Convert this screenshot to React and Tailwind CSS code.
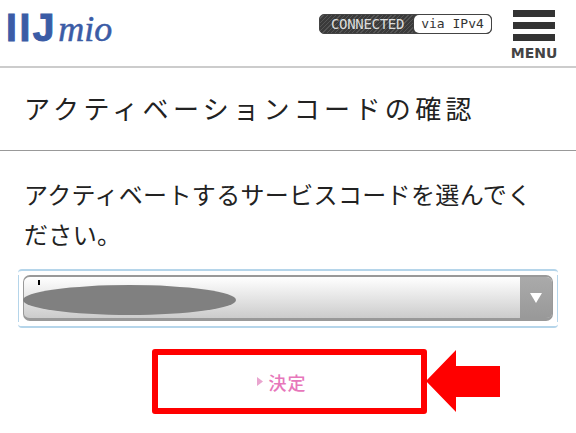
export default function App() {
  const jp = "font-['Noto_Sans_CJK_JP','Noto_Sans',sans-serif]";
  return (
    <div className={`w-[576px] h-[433px] bg-white overflow-hidden ${jp}`}>
      <header className="h-[68px] border-b-2 border-[#cccccc] flex items-start justify-between">
        <div className="ml-[6px] mt-[3px] flex items-baseline h-[50px] text-[#3b5ca6]">
          <span className="font-['Liberation_Sans',sans-serif] font-bold text-[39px] leading-[50px] tracking-[2.6px] [-webkit-text-stroke:1px_#3b5ca6]">IIJ</span>
          <span className="font-['Liberation_Serif',serif] italic text-[36px] leading-[50px] ml-[1px] [-webkit-text-stroke:0.5px_#3b5ca6]">mio</span>
        </div>
        <div className="flex items-start">
          <div className="mt-[14px] mr-[20px] w-[173px] h-[20px] rounded-[5px] border border-[#444] flex items-stretch overflow-hidden bg-[#3f3f3f]">
            <div className="w-[93px] pl-[2px] bg-[repeating-linear-gradient(135deg,#3a3a3a_0px,#3a3a3a_2px,#555555_2px,#555555_3px)] text-[#dddddd] text-[14px] leading-[18px] text-center font-['DejaVu_Sans_Mono',monospace] tracking-[-0.3px] whitespace-nowrap">CONNECTED</div>
            <div className="flex-1 ml-[1px] rounded-[5px] bg-white text-[#333] text-[13px] leading-[18px] text-center font-['DejaVu_Sans_Mono',monospace]">via IPv4</div>
          </div>
          <div className="mt-[10px] mr-[20px] w-[44px] flex flex-col items-center">
            <div className="w-[42px] h-[7px] bg-[#333]" />
            <div className="w-[42px] h-[7px] bg-[#333] mt-[5px]" />
            <div className="w-[42px] h-[7px] bg-[#333] mt-[5px]" />
            <div className="mt-[3px] font-['DejaVu_Sans',sans-serif] font-bold text-[#444] text-[14px] leading-[18px]">MENU</div>
          </div>
        </div>
      </header>

      <div className="h-[83px] border-b border-[#999999] px-[24px] flex items-center">
        <h1 className="text-[26px] font-normal text-[#222] tracking-[4.35px] leading-[40px] whitespace-nowrap -mt-[2px]">アクティベーションコードの確認</h1>
      </div>

      <p className="mt-[23px] mx-[24px] w-[520px] text-[24px] leading-[40px] tracking-[0.35px] text-[#222]">
        アクティベートするサービスコードを選んでください。
      </p>

      <div className="relative mt-[15px] ml-[18px] w-[540px] h-[59px] border-y-2 border-[#b5d5ea] rounded-[4px]">
        <div className="absolute left-0 top-[4px] bottom-[4px] w-[1px] bg-[#b5d5ea]" />
        <div className="absolute right-0 top-[4px] bottom-[4px] w-[1px] bg-[#b5d5ea]" />
        <div className="absolute left-[5px] top-[4px] w-[530px] h-[46px] rounded-[7px] border border-[#999] border-t-2 border-b-[3px] overflow-hidden bg-[linear-gradient(#ffffff,#cccccc)] flex justify-end">
          <div className="w-[32px] bg-[linear-gradient(#aaaaaa,#999999)] flex items-center justify-center">
            <svg width="12" height="10" viewBox="0 0 12 10"><path d="M0 0H12L6 10Z" fill="#fff" /></svg>
          </div>
        </div>
        <div className="absolute left-[5px] top-[14px] w-[213px] h-[30px] rounded-[50%] bg-[#808080]" />
        <div className="absolute left-[20px] top-[9px] w-[2px] h-[5px] bg-black" />
      </div>

      <div className="relative mt-[21px] ml-[152px] w-[275px] h-[65px] border-[6px] border-[#ff0000] rounded-[3px] flex items-center justify-center">
        <span className="text-[#e777bb] text-[18px] tracking-[1px] leading-[20px] flex items-center font-medium -ml-[16px]">
          <svg width="6" height="9" viewBox="0 0 6 9" className="mr-[6px]"><path d="M0 0L6 4.5L0 9Z" fill="#e9a5cf" /></svg>
          決定
        </span>
        <svg className="absolute left-[268px] -top-[6px]" width="80" height="66" viewBox="0 0 80 66">
          <path d="M0 32L30 1V17H74V48H30V63Z" fill="#ff0000" />
        </svg>
      </div>
    </div>
  );
}
